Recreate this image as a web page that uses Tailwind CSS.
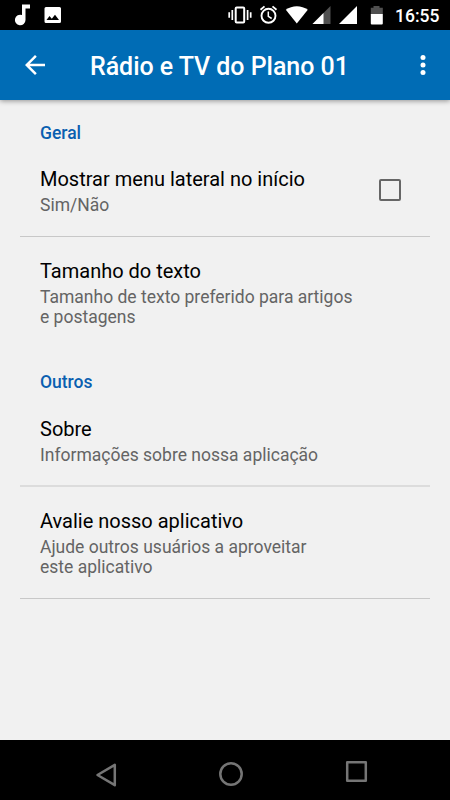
<!DOCTYPE html>
<html lang="pt-BR">
<head>
    <meta charset="UTF-8">
    <meta name="viewport" content="width=device-width, initial-scale=1.0">
    <title>Rádio e TV do Plano 01</title>
    <script src="https://cdn.jsdelivr.net/npm/@tailwindcss/browser@4"></script>
</head>
<body class="bg-[#f1f1f1] font-[Roboto,sans-serif]">

    <div class="flex flex-col w-[450px] h-[800px] overflow-hidden">

        <!-- status bar -->
        <div class="flex h-[30px] shrink-0 bg-black text-white">
            <svg class="w-[220px] h-[30px]" viewBox="0 0 220 30" fill="currentColor">
                <path d="M22 4.500h8v4h-4.500V20a5.300 5.300 0 1 1-3.500-5z"/>
                <path fill-rule="evenodd" d="M46 7h13.500a1.500 1.500 0 0 1 1.500 1.500v13a1.500 1.500 0 0 1-1.500 1.500H46a1.500 1.500 0 0 1-1.500-1.500v-13A1.500 1.500 0 0 1 46 7zM46.500 20h12.500l-4-5.300-3.200 4-2.300-2.700z"/>
            </svg>
            <svg class="w-[170px] h-[30px]" viewBox="220 0 170 30" fill="currentColor">
                <g fill="none" stroke="currentColor">
                    <rect x="235.700" y="7.500" width="8.500" height="15" rx="1" stroke-width="2"/>
                    <path stroke-width="1.700" d="M232.300 10v10M229.200 12.300v5.400M247.600 10v10M250.700 12.300v5.400"/>
                    <circle cx="268.500" cy="15.800" r="7" stroke-width="1.900"/>
                    <path stroke-width="1.800" d="M260.500 9.800l4-3.400M276.500 9.800l-4-3.400"/>
                    <path stroke-width="1.500" d="M268.300 11.500v4.800l3.400 2.200"/>
                </g>
                <path d="M285.800 9.800c6.200-4.700 15.800-4.700 22 0L296.800 23.500z"/>
                <path fill="#505050" d="M330.500 6v18h-18z"/>
                <path d="M323.500 13v11h-11z"/>
                <path d="M357 6v18h-18z"/>
                <path fill="#505050" d="M373.500 6h6v1.800h3.300v6.400h-12V7.800h2.700z"/>
                <path d="M370.800 14h12v9.500a1 1 0 0 1-1 1h-10a1 1 0 0 1-1-1z"/>
            </svg>
            <span class="pl-[5px] pt-[6px] text-[17.5px] leading-[21px] font-medium whitespace-nowrap">16:55</span>
        </div>

        <!-- toolbar -->
        <header class="relative flex items-center h-[70px] shrink-0 bg-[#006cb5] text-white shadow-[0_1px_5px_rgba(0,0,0,0.4)]">
            <svg class="ml-5 w-[30px] h-[30px]" viewBox="0 0 24 24" fill="currentColor">
                <path d="M20 11H7.830l5.590-5.590L12 4l-8 8 8 8 1.410-1.410L7.830 13H20v-2z"/>
            </svg>
            <h1 class="ml-10 pt-[3px] grow text-[25px] leading-[30px] tracking-[-0.05px] font-medium whitespace-nowrap">Rádio e TV do Plano 01</h1>
            <svg class="mr-[12.5px] w-[30px] h-[30px]" viewBox="0 0 24 24" fill="currentColor">
                <circle cx="12" cy="6" r="2"/>
                <circle cx="12" cy="12" r="2"/>
                <circle cx="12" cy="18" r="2"/>
            </svg>
        </header>

        <!-- preferences -->
        <main class="grow px-5">
            <section class="h-[250px]">
                <h2 class="px-5 pt-[22.5px] pb-[1.5px] text-[17.5px] leading-[21px] font-medium text-[#0a5fb0]">Geral</h2>
                <div class="flex items-start justify-between h-[92px] px-5 pt-[22px] border-b border-[#c8c8c8]">
                    <div>
                        <p class="text-[20px] leading-[24px] text-black">Mostrar menu lateral no início</p>
                        <p class="mt-[4px] text-[17.5px] leading-[20px] text-[#646464]">Sim/Não</p>
                    </div>
                    <div class="mr-[9px] mt-3 w-[22px] h-[22px] border-2 border-[#666] rounded-[2px]"></div>
                </div>
                <div class="px-5 pt-[22px]">
                    <p class="text-[20px] leading-[24px] text-black">Tamanho do texto</p>
                    <p class="mt-[4px] text-[17.5px] leading-[20px] text-[#646464]">Tamanho de texto preferido para artigos<br>e postagens</p>
                </div>
            </section>

            <section>
                <h2 class="px-5 pt-[21.5px] pb-[2.5px] text-[17.5px] leading-[21px] font-medium text-[#0a5fb0]">Outros</h2>
                <div class="h-[92px] px-5 pt-[22px] border-b-2 border-[#dcdcdc]">
                    <p class="text-[20px] leading-[24px] text-black">Sobre</p>
                    <p class="mt-[4px] text-[17.5px] leading-[20px] text-[#646464]">Informações sobre nossa aplicação</p>
                </div>
                <div class="h-[112px] px-5 pt-[22px] border-b border-[#c8c8c8]">
                    <p class="text-[20px] leading-[24px] text-black">Avalie nosso aplicativo</p>
                    <p class="mt-[4px] text-[17.5px] leading-[20px] text-[#646464]">Ajude outros usuários a aproveitar<br>este aplicativo</p>
                </div>
            </section>
        </main>

        <!-- navigation bar -->
        <nav class="h-[60px] shrink-0 bg-black">
            <svg class="w-[450px] h-[60px]" viewBox="0 0 450 60" fill="none" stroke="#757575" stroke-width="2.500" stroke-linejoin="round">
                <path d="M114.800 24.800v20.400L97.500 35z"/>
                <circle cx="231" cy="34" r="10.700"/>
                <rect x="347.200" y="22.200" width="18.600" height="18.600"/>
            </svg>
        </nav>
    </div>

</body>
</html>
